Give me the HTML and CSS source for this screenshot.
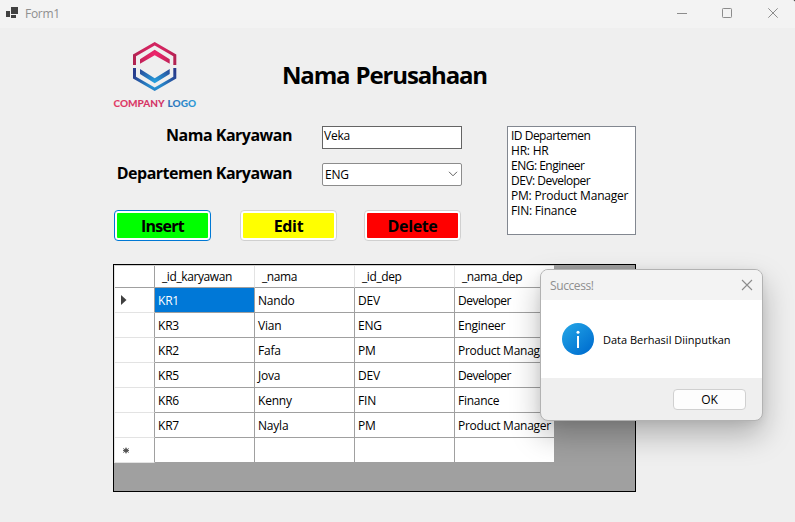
FILE: index.html
```html
<!DOCTYPE html>
<html lang="id">
<head>
<meta charset="utf-8">
<title>Form1</title>
<link rel="stylesheet" href="styles.css">
</head>
<body>
<div class="window">
  <header class="titlebar">
    <svg class="app-icon" width="14" height="13" viewBox="0 0 14 13" fill="#404040"><path d="M0 4h4v6H0zM5 0h7v7H5zM5 8h5v3H5z"/></svg>
    <span class="window-title">Form1</span>
    <svg class="controls" width="104" height="12" viewBox="0 0 104 12" fill="none" stroke="#8c8c8c"><path d="M0 6.500h10"/><rect x="45.500" y="1.500" width="9" height="9" rx=".8"/><path d="M91.300 1.300l9.400 9.400M100.700 1.300l-9.400 9.400"/></svg>
  </header>
  <main class="form">
    <div class="brand">
      <svg class="logo" width="84" height="68" viewBox="0 0 84 68">
        <defs>
          <radialGradient id="pink" gradientUnits="userSpaceOnUse" cx="42" cy="14" r="23"><stop offset="0" stop-color="#f0246c"/><stop offset="1" stop-color="#ad2350"/></radialGradient>
          <radialGradient id="blue" gradientUnits="userSpaceOnUse" cx="42" cy="42" r="23"><stop offset="0" stop-color="#25a4e2"/><stop offset="1" stop-color="#283c8c"/></radialGradient>
          <linearGradient id="word"><stop offset="0" stop-color="#e03a65"/><stop offset="1" stop-color="#cf3266"/></linearGradient>
          <linearGradient id="word2"><stop offset="0" stop-color="#2e6cb5"/><stop offset="1" stop-color="#2c9bd8"/></linearGradient>
        </defs>
        <path d="M20 24V13.500L41.700 1l21.600 12.500V24h-3v-8.800L41.700 4.500 23 15.200V24z" fill="url(#pink)"/>
        <path d="M27 22.800v-4.600l14.700-9.400 15 9.400v4.600l-15-8.600z" fill="url(#pink)"/>
        <path d="M20 27v10.500L41.700 50l21.600-12.500V27h-3v8.800L41.700 46.500 23 35.800V27z" fill="url(#blue)"/>
        <path d="M27 28v5l14.700 9.300 15-9.300v-5l-15 9.300z" fill="url(#blue)"/>
        <text class="logo-text" x=".5" y="65.800" textLength="51" fill="url(#word)">COMPANY</text>
        <text class="logo-text" x="54.500" y="65.800" textLength="28.500" fill="url(#word2)">LOGO</text>
      </svg>
      <h1>Nama Perusahaan</h1>
    </div>
    <div class="entry">
      <div class="fields">
        <label class="name-label" for="name">Nama Karyawan</label>
        <div class="textbox" id="name">Veka</div>
        <label class="dep-label" for="dep">Departemen Karyawan</label>
        <div class="combo" id="dep"><span>ENG</span><svg width="10" height="6" viewBox="0 0 10 6" fill="none" stroke="#606060"><path d="M1 .8l4 4 4-4"/></svg></div>
        <div class="actions">
          <button class="insert">Insert</button>
          <button class="edit">Edit</button>
          <button class="delete">Delete</button>
        </div>
      </div>
      <ul class="listbox">
        <li class="tight">ID Departemen</li>
        <li>HR: HR</li>
        <li class="tight">ENG: Engineer</li>
        <li class="tight">DEV: Developer</li>
        <li>PM: Product Manager</li>
        <li>FIN: Finance</li>
      </ul>
    </div>
    <div class="grid">
      <table>
        <thead><tr><th></th><th>_id_karyawan</th><th>_nama</th><th>_id_dep</th><th>_nama_dep</th></tr></thead>
        <tbody>
          <tr><th><svg width="6" height="10" viewBox="0 0 6 10" fill="#404040"><path d="M0 0l5.500 5L0 10z"/></svg></th><td class="selected">KR1</td><td>Nando</td><td>DEV</td><td class="tight">Developer</td></tr>
          <tr><th></th><td>KR3</td><td>Vian</td><td>ENG</td><td>Engineer</td></tr>
          <tr><th></th><td>KR2</td><td>Fafa</td><td>PM</td><td>Product Manager</td></tr>
          <tr><th></th><td>KR5</td><td>Jova</td><td>DEV</td><td class="tight">Developer</td></tr>
          <tr><th></th><td>KR6</td><td>Kenny</td><td>FIN</td><td>Finance</td></tr>
          <tr><th></th><td>KR7</td><td>Nayla</td><td>PM</td><td>Product Manager</td></tr>
          <tr class="new-row"><th><svg width="9" height="7" viewBox="0 0 9 7" stroke="#606060"><path d="M5 .5v6M2.200 1.500l5.600 4M7.800 1.500l-5.600 4M2 3.500h6"/><circle cx="5" cy="3.500" r="1.700" fill="#505050"/></svg></th><td></td><td></td><td></td><td></td></tr>
        </tbody>
      </table>
    </div>
  </main>
</div>
<section class="dialog">
  <header class="dialog-head">
    <span>Success!</span>
    <svg width="12" height="12" viewBox="0 0 12 12" stroke="#8c8c8c" stroke-width="1.100"><path d="M1 1l10 10M11 1L1 11"/></svg>
  </header>
  <div class="dialog-body">
    <svg width="32" height="32" viewBox="0 0 32 32">
      <defs><linearGradient id="info" x1=".15" y1=".1" x2=".85" y2=".9"><stop offset="0" stop-color="#20a0e4"/><stop offset="1" stop-color="#006fd0"/></linearGradient></defs>
      <circle cx="16" cy="16" r="16" fill="url(#info)"/>
      <circle cx="16" cy="9.200" r="1.500" fill="#fff"/><path d="M15 13h2v12h-2z" fill="#fff"/>
    </svg>
    <span>Data Berhasil Diinputkan</span>
  </div>
  <footer class="dialog-foot"><button class="ok">OK</button></footer>
</section>
</body>
</html>
```
FILE: styles.css
```css
* { box-sizing: border-box; }
html { background: #303030; }
body {
  margin: 0;
  height: 522px;
  overflow: hidden;
  font: 12px/15px "Open Sans", "Noto Sans", sans-serif;
  letter-spacing: -.2px;
  color: #000;
}
svg { display: block; flex: none; }
button { font: inherit; color: inherit; letter-spacing: inherit; padding: 0; }

.window { height: 522px; background: #efefef; border-top-right-radius: 3px; overflow: hidden; }
.titlebar { display: flex; align-items: flex-start; height: 28px; padding: 7px 17px 0 6px; background: #f3f3f3; }
.window-title { margin-left: 5px; color: #8f8f8f; line-height: 14px; letter-spacing: -.3px; }
.controls { margin-left: auto; margin-right: -3px; }

.form { width: 523px; margin-left: 113px; padding-top: 13px; }
.brand { display: flex; height: 85px; }
.logo-text { font: 900 10px Lato, sans-serif; letter-spacing: 0; }
h1 { margin: 18px 0 0 85px; font-size: 24px; line-height: 32px; letter-spacing: -1.15px; word-spacing: 1px; white-space: nowrap; }

.entry { display: flex; justify-content: space-between; height: 138px; }
.fields {
  display: grid;
  grid-template-columns: 179px 140px;
  grid-template-rows: 23px 23px 31px;
  column-gap: 30px;
  row-gap: 14px;
  align-content: start;
}
label { padding-top: 1px; text-align: right; font-size: 16px; font-weight: 700; line-height: 17px; letter-spacing: -.5px; white-space: nowrap; }
.dep-label { padding-top: 2px; }
.textbox { height: 23px; padding: 1px; border: 1px solid #646464; background: #fff; }
.combo { display: flex; align-items: center; justify-content: space-between; height: 23px; padding: 0 3px 1px 2px; border: 1px solid #8c8c8c; border-radius: 2px; background: #fff; }
.actions { grid-column: 1 / -1; display: flex; gap: 29px; margin: 10px 0 0 1px; }
.actions button {
  flex: none;
  width: 97px; height: 31px;
  padding: 2px;
  border: 1px solid #d0d0d0;
  border-radius: 4px;
  font-size: 16px; font-weight: 700; line-height: 27px;
  letter-spacing: -.35px;
}
.actions .insert { border-color: #0078d4; background: linear-gradient(#0f0, #0f0) content-box, #fff; letter-spacing: -.7px; }
.actions .edit { padding-right: 2px; background: linear-gradient(#ff0, #ff0) content-box, #fff; }
.actions .delete { margin-left: -2px; background: linear-gradient(#f00, #f00) content-box, #fff; }
.listbox { width: 129px; height: 109px; margin: 0; padding: 1px 3px; border: 1px solid #828790; background: #fff; list-style: none; white-space: nowrap; }
.tight { letter-spacing: -.5px; }

.grid { height: 228px; border: 1px solid #000; background: #a0a0a0; }
table { width: 440px; table-layout: fixed; border-collapse: separate; border-spacing: 0; border-top: 1px solid #d0d0d0; border-left: 1px solid #e3e3e3; }
th, td { width: 100px; height: 25px; padding: 0 0 0 3px; border-right: 1px solid #a0a0a0; border-bottom: 1px solid #a0a0a0; background: #fff; text-align: left; font-weight: 400; white-space: nowrap; }
th:first-child { width: 40px; padding-left: 6px; border-bottom-color: #e3e3e3; }
thead th { height: 22px; padding-left: 7px; border-right-color: #e3e3e3; letter-spacing: -.4px; }
thead th:first-child { border-color: #a0a0a0; }
th:last-child, td:last-child { width: 99px; border-right: 0; }
td:last-child:not(.tight) { letter-spacing: -.26px; }
.selected { background: #0078d7; color: #fff; }

.dialog {
  position: absolute;
  left: 540px; top: 269px;
  width: 223px; height: 152px;
  border: 1px solid #b2b2b2;
  border-radius: 8px;
  background: #efefef;
  overflow: hidden;
  box-shadow: 0 14px 30px rgba(0, 0, 0, .27), 0 2px 8px rgba(0, 0, 0, .06);
}
.dialog-head { display: flex; align-items: center; justify-content: space-between; height: 30px; padding: 0 9px; background: #f3f3f3; color: #8f8f8f; letter-spacing: -.4px; }
.dialog-body { display: flex; align-items: center; gap: 9px; height: 78px; padding-left: 21px; background: #fff; font-size: 11px; letter-spacing: 0; white-space: nowrap; }
.dialog-foot { display: flex; justify-content: flex-end; padding: 11px 16px 0 0; }
.ok { width: 73px; height: 21px; padding-top: 1px; border: 1px solid #d0d0d0; border-radius: 4px; background: #fdfdfd; line-height: 18px; }
```
